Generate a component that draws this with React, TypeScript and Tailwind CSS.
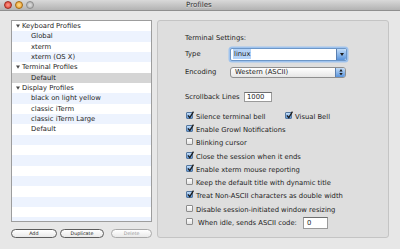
import { FC, ReactNode } from 'react';
import clsx from 'clsx';

interface IRow {
  label?: string;
  group?: boolean;
  selected?: boolean;
}

const rows: IRow[] = [
  { label: 'Keyboard Profiles', group: true },
  { label: 'Global' },
  { label: 'xterm' },
  { label: 'xterm (OS X)' },
  { label: 'Terminal Profiles', group: true },
  { label: 'Default', selected: true },
  { label: 'Display Profiles', group: true },
  { label: 'black on light yellow' },
  { label: 'classic iTerm' },
  { label: 'classic iTerm Large' },
  { label: 'Default' },
  ...Array.from({ length: 10 }, () => ({})),
];

const Checkbox: FC<{ checked?: boolean }> = ({ checked }) => (
  <span
    className={clsx(
      'relative inline-block h-[7px] w-[7px] shrink-0 rounded-[1px] border',
      checked
        ? 'border-[#55779f] bg-linear-to-b from-[#c4def8] to-[#5b97dd]'
        : 'border-[#8c8c8c] bg-linear-to-b from-white to-[#e2e2e2]',
    )}
  >
    {checked && (
      <svg viewBox="0 0 8 9" className="absolute -top-[2px] left-0 h-[8px] w-[7px]">
        <path d="M1 5 L3.2 7.6 L7.4 0.6" stroke="#1b1b1b" strokeWidth="1.5" fill="none" />
      </svg>
    )}
  </span>
);

const CheckRow: FC<{ checked?: boolean; children: ReactNode; className?: string }> = ({
  checked,
  children,
  className,
}) => (
  <div className={clsx('flex items-center', className)}>
    <span className="ml-[1px]">
      <Checkbox checked={checked} />
    </span>
    <span className="ml-[3px] whitespace-nowrap">{children}</span>
  </div>
);

const PillButton: FC<{ width: string; disabled?: boolean; children: ReactNode }> = ({
  width,
  disabled,
  children,
}) => (
  <div
    className={clsx(
      'flex h-[9px] items-center justify-center rounded-full border bg-linear-to-b from-white to-[#e9e9e9] text-[4.8px]',
      width,
      disabled ? 'border-[#a9a9a9] text-[#9a9a9a]' : 'border-[#5c5c5c] text-[#222]',
    )}
  >
    {children}
  </div>
);

const Triangle: FC = () => (
  <svg viewBox="0 0 4 4" className="h-[4px] w-[4px]">
    <path d="M0 0.5 H4 L2 3.8 Z" fill="#4a4a4a" />
  </svg>
);

export default function App() {
  return (
    <div className="flex h-[249px] w-[400px] flex-col overflow-hidden bg-[#e7e7e7] font-['DejaVu_Sans',sans-serif] text-[6.8px] text-[#1c1c1c]">
      {/* title bar */}
      <div className="relative flex h-[11px] shrink-0 items-center border-b border-[#8f8f8f] bg-linear-to-b from-[#d9d9d9] to-[#b3b3b3]">
        <div className="ml-[4px] flex gap-[3.5px]">
          <span className="h-[7.5px] w-[7.5px] rounded-full border border-[#9c2b22] bg-radial from-[#ff9a90] to-[#d8291b]" />
          <span className="h-[7.5px] w-[7.5px] rounded-full border border-[#a66a12] bg-radial from-[#ffe08a] to-[#e6961a]" />
          <span className="h-[7.5px] w-[7.5px] rounded-full border border-[#8c8c8c] bg-radial from-[#e0e0e0] to-[#a8a8a8]" />
        </div>
        <span className="absolute left-[186px] top-[0px] text-[7.1px] text-[#333] [text-shadow:0_1px_0_rgba(255,255,255,0.5)]">
          Profiles
        </span>
      </div>

      {/* body */}
      <div className="flex pl-[11px] pt-[9px]">
        <div className="flex w-[141px] flex-col">
          <div className="h-[202px] overflow-hidden border border-[#9d9d9d] bg-white">
            {rows.map((row, i) => (
              <div
                key={i}
                className={clsx(
                  'flex h-[10.33px] items-center whitespace-nowrap',
                  row.selected ? 'bg-[#d5d5d5]' : i % 2 === 1 ? 'bg-[#edf3fe]' : 'bg-white',
                  row.group ? 'pl-[4px]' : 'pl-[19px]',
                )}
              >
                {row.group && (
                  <span className="mr-[2px] flex">
                    <Triangle />
                  </span>
                )}
                {row.label}
              </div>
            ))}
          </div>
          <div className="mt-[7px] flex gap-[3px]">
            <PillButton width="w-[47px]">Add</PillButton>
            <PillButton width="w-[46px]">Duplicate</PillButton>
            <span className="w-[1px]" />
            <PillButton width="w-[42px]" disabled>
              Delete
            </PillButton>
          </div>
        </div>

        {/* settings panel */}
        <div className="ml-[5px] flex h-[218px] w-[232px] flex-col rounded-[3px] border border-[#c4c4c4] bg-[#dedede] pl-[27px] pt-[12px]">
          <div className="flex h-[10px] items-center">Terminal Settings:</div>

          <div className="mt-[4px] flex h-[14px] items-center">
            <span className="w-[45px]">Type</span>
            <div className="flex h-[13px] w-[117px] items-stretch rounded-[2px] border border-[#6d97c8] bg-white shadow-[0_0_0_1.5px_#9fc3ee]">
              <div className="flex flex-1 items-center pl-[2px]">
                <span className="bg-[#b5d3f7] px-[1px]">linux</span>
              </div>
              <div className="flex w-[10px] items-center justify-center rounded-r-[2px] border-l border-[#5a7fb0] bg-linear-to-b from-[#c2dcf7] to-[#5893db]">
                <svg viewBox="0 0 4 3" className="h-[3px] w-[4px]">
                  <path d="M0 0 H4 L2 3 Z" fill="#1b1b1b" />
                </svg>
              </div>
            </div>
          </div>

          <div className="mt-[5px] flex h-[12px] items-center">
            <span className="w-[45px]">Encoding</span>
            <div className="flex h-[11px] w-[116px] items-stretch overflow-hidden rounded-[3px] border border-[#8e8e8e] bg-linear-to-b from-white to-[#e6e6e6]">
              <div className="flex flex-1 items-center pl-[4px]">Western (ASCII)</div>
              <div className="flex w-[10px] flex-col items-center justify-center gap-[1px] border-l border-[#5a7fb0] bg-linear-to-b from-[#c2dcf7] to-[#5893db]">
                <svg viewBox="0 0 4 3" className="h-[2.5px] w-[4px]">
                  <path d="M0 3 H4 L2 0 Z" fill="#1b1b1b" />
                </svg>
                <svg viewBox="0 0 4 3" className="h-[2.5px] w-[4px]">
                  <path d="M0 0 H4 L2 3 Z" fill="#1b1b1b" />
                </svg>
              </div>
            </div>
          </div>

          <div className="mt-[14px] flex h-[10px] items-center">
            <span className="w-[59px] whitespace-nowrap">Scrollback Lines</span>
            <div className="flex h-[10px] w-[28px] items-center border border-[#9a9a9a] border-t-[#6f6f6f] bg-white pl-[2px]">
              1000
            </div>
          </div>

          <div className="mt-[8.4px] flex flex-col">
            <div className="flex h-[13.25px] items-center">
              <CheckRow checked className="w-[99px]">
                Silence terminal bell
              </CheckRow>
              <CheckRow checked>Visual Bell</CheckRow>
            </div>
            <CheckRow checked className="h-[13.25px]">
              Enable Growl Notifications
            </CheckRow>
            <CheckRow className="h-[13.25px]">Blinking cursor</CheckRow>
            <CheckRow checked className="h-[13.25px]">
              Close the session when it ends
            </CheckRow>
            <CheckRow checked className="h-[13.25px]">
              Enable xterm mouse reporting
            </CheckRow>
            <CheckRow className="h-[13.25px]">Keep the default title with dynamic title</CheckRow>
            <CheckRow checked className="h-[13.25px]">
              Treat Non-ASCII characters as double width
            </CheckRow>
            <CheckRow className="h-[13.25px]">Disable session-initiated window resizing</CheckRow>
            <div className="flex h-[13.25px] items-center">
              <span className="ml-[1px]">
                <Checkbox />
              </span>
              <span className="ml-[5px] w-[105px] whitespace-nowrap">When idle, sends ASCII code:</span>
              <div className="flex h-[12px] w-[25px] items-center border border-[#9a9a9a] border-t-[#6f6f6f] bg-white pl-[3px]">
                0
              </div>
            </div>
          </div>
        </div>
      </div>
    </div>
  );
}
